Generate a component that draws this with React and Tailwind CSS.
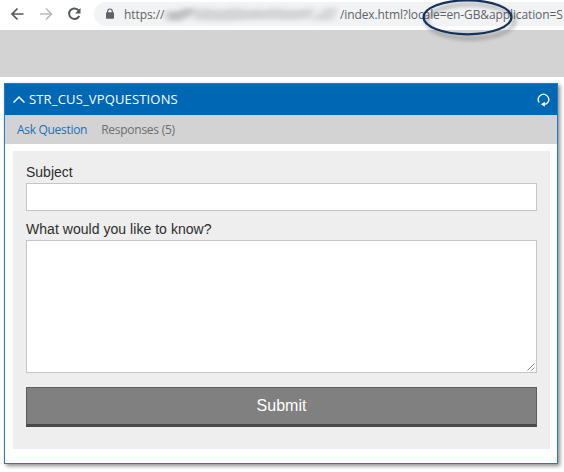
import React from "react";

function AddressBar() {
  return (
    <div className="flex h-[30px] items-center bg-white text-[#5f6368]">
      <svg className="h-[30px] w-[94px] shrink-0" viewBox="0 0 94 30" fill="none" strokeWidth="1.7">
        <path d="M23.5 14H12.5M17.5 8.5 12 14l5.500 5.500" stroke="#55585c" />
        <path d="M40 14h11M46 8.500 51.500 14 46 19.500" stroke="#b9bbbe" />
        <path d="M78.600 10.400A5.300 5.300 0 1 0 79.200 16" stroke="#55585c" strokeWidth="2" />
        <path d="M80.500 8v5.500H75z" fill="#55585c" />
      </svg>
      <div className="flex h-[24px] min-w-0 flex-1 -translate-y-px items-center overflow-hidden rounded-l-full bg-[#f1f3f4] pl-[11px] font-['Open_Sans',sans-serif] text-[12px] whitespace-nowrap">
        <svg className="h-[12px] w-[10px] shrink-0" viewBox="0 0 10 12">
          <path d="M2.700 5V3.300a2.300 2.300 0 0 1 4.600 0V5" fill="none" stroke="#5f6368" strokeWidth="1.200" />
          <rect x="1" y="4.200" width="8" height="6.600" rx=".8" fill="#5f6368" />
        </svg>
        <span className="ml-[9px] w-[39px] shrink-0 pt-px tracking-[-0.08px]">https://</span>
        <svg className="h-[22px] w-[177px] shrink-0" viewBox="0 0 177 22">
          <defs>
            <filter id="soft" x="-10%" y="-50%" width="120%" height="200%">
              <feGaussianBlur stdDeviation="3.500 2.200" />
            </filter>
          </defs>
          <g filter="url(#soft)" fill="#c0c2c4">
            <path d="M3 8h12l8-3h10l-6 8-10 5H4z" />
            <path d="M30 9l10-4 16 2 16-2 16 2 10-2-3 11-14 1-20 1-30-1z" opacity=".6" />
            <path d="M96 8l14-3 18 2 24-2-4 10-16 2-40-1z" opacity=".6" />
            <path d="M150 15l12-10h13l-5 12-20 1z" opacity=".55" />
          </g>
        </svg>
        <span className="shrink-0 pt-px tracking-[-0.11px]">/index.html?locale=en-GB&amp;application=S</span>
      </div>
    </div>
  );
}

function PanelHeader() {
  return (
    <div className="flex h-[31px] items-center bg-[#0067b5] pr-[7px] pl-[8px] text-white">
      <svg className="h-[9px] w-[12px]" viewBox="0 0 12 9" fill="none" stroke="white" strokeWidth="1.500">
        <path d="M.5 7.500 6 2l5.500 5.500" />
      </svg>
      <h1 className="ml-[4px] font-['Open_Sans',sans-serif] text-[13px] tracking-[0.16px] whitespace-nowrap">STR_CUS_VPQUESTIONS</h1>
      <svg className="ml-auto h-[14px] w-[13px]" viewBox="0 0 13 14" fill="none" stroke="white" strokeWidth="1.300">
        <path d="M2.200 9.500A5.200 5.200 0 1 1 10.800 9.500Q9.500 11.200 7 11.400" />
        <path d="M7.800 8.800v5L4 11.300z" fill="white" stroke="none" />
      </svg>
    </div>
  );
}

export default function App() {
  return (
    <div className="relative h-[472px] w-[564px] overflow-hidden bg-white">
      <AddressBar />
      <div className="h-[47px] bg-[#d3d3d3]" />

      <section className="mt-[6px] ml-[4px] h-[381px] w-[554px] border border-[#2479b8] bg-white shadow-[2px_2px_4px_rgba(0,0,0,0.45)]">
        <PanelHeader />
        <nav className="flex h-[29px] items-center gap-[14px] bg-[#d3d3d3] pl-[12px] font-['Open_Sans',sans-serif] text-[12px] whitespace-nowrap">
          <span className="tracking-[-0.3px] text-[#1b70b8]">Ask Question</span>
          <span className="tracking-[-0.26px] text-[#6e6e6e]">Responses (5)</span>
        </nav>
        <div className="mt-[7px] mr-[7px] ml-[8px] flex h-[298px] flex-col bg-[#eeeeee] px-[13px] pt-[11px] font-['Liberation_Sans',sans-serif] text-[14px] text-[#2d2d2d]">
          <label className="h-[21px] leading-[20px]">Subject</label>
          <div className="h-[28px] shrink-0 border border-[#c6c6c6] bg-white" />
          <label className="mt-[8px] h-[21px] leading-[20px] tracking-[0.04px]">What would you like to know?</label>
          <div className="flex h-[133px] shrink-0 items-end justify-end border border-[#c6c6c6] bg-white">
            <svg className="h-[10px] w-[10px]" viewBox="0 0 10 10" stroke="#777" strokeWidth=".9">
              <path d="M1.500 8.500l7-7M5.500 8.500l3-3" />
            </svg>
          </div>
          <button className="mt-[14px] h-[40px] shrink-0 border border-b-[3px] border-[#5c5c5c] border-b-[#494949] bg-[#808080] text-[16px] leading-[36px] text-white">
            Submit
          </button>
        </div>
      </section>

      <svg className="pointer-events-none absolute top-0 left-[414px] h-[48px] w-[110px]" viewBox="0 0 110 48" fill="none">
        <defs>
          <filter id="ring-shadow" x="-10%" y="-20%" width="125%" height="150%">
            <feDropShadow dx="3" dy="4" stdDeviation="2" floodColor="#000" floodOpacity=".4" />
          </filter>
        </defs>
        <ellipse cx="53.500" cy="17.300" rx="44" ry="17" stroke="#13315c" strokeWidth="2.200" filter="url(#ring-shadow)" />
      </svg>
    </div>
  );
}
